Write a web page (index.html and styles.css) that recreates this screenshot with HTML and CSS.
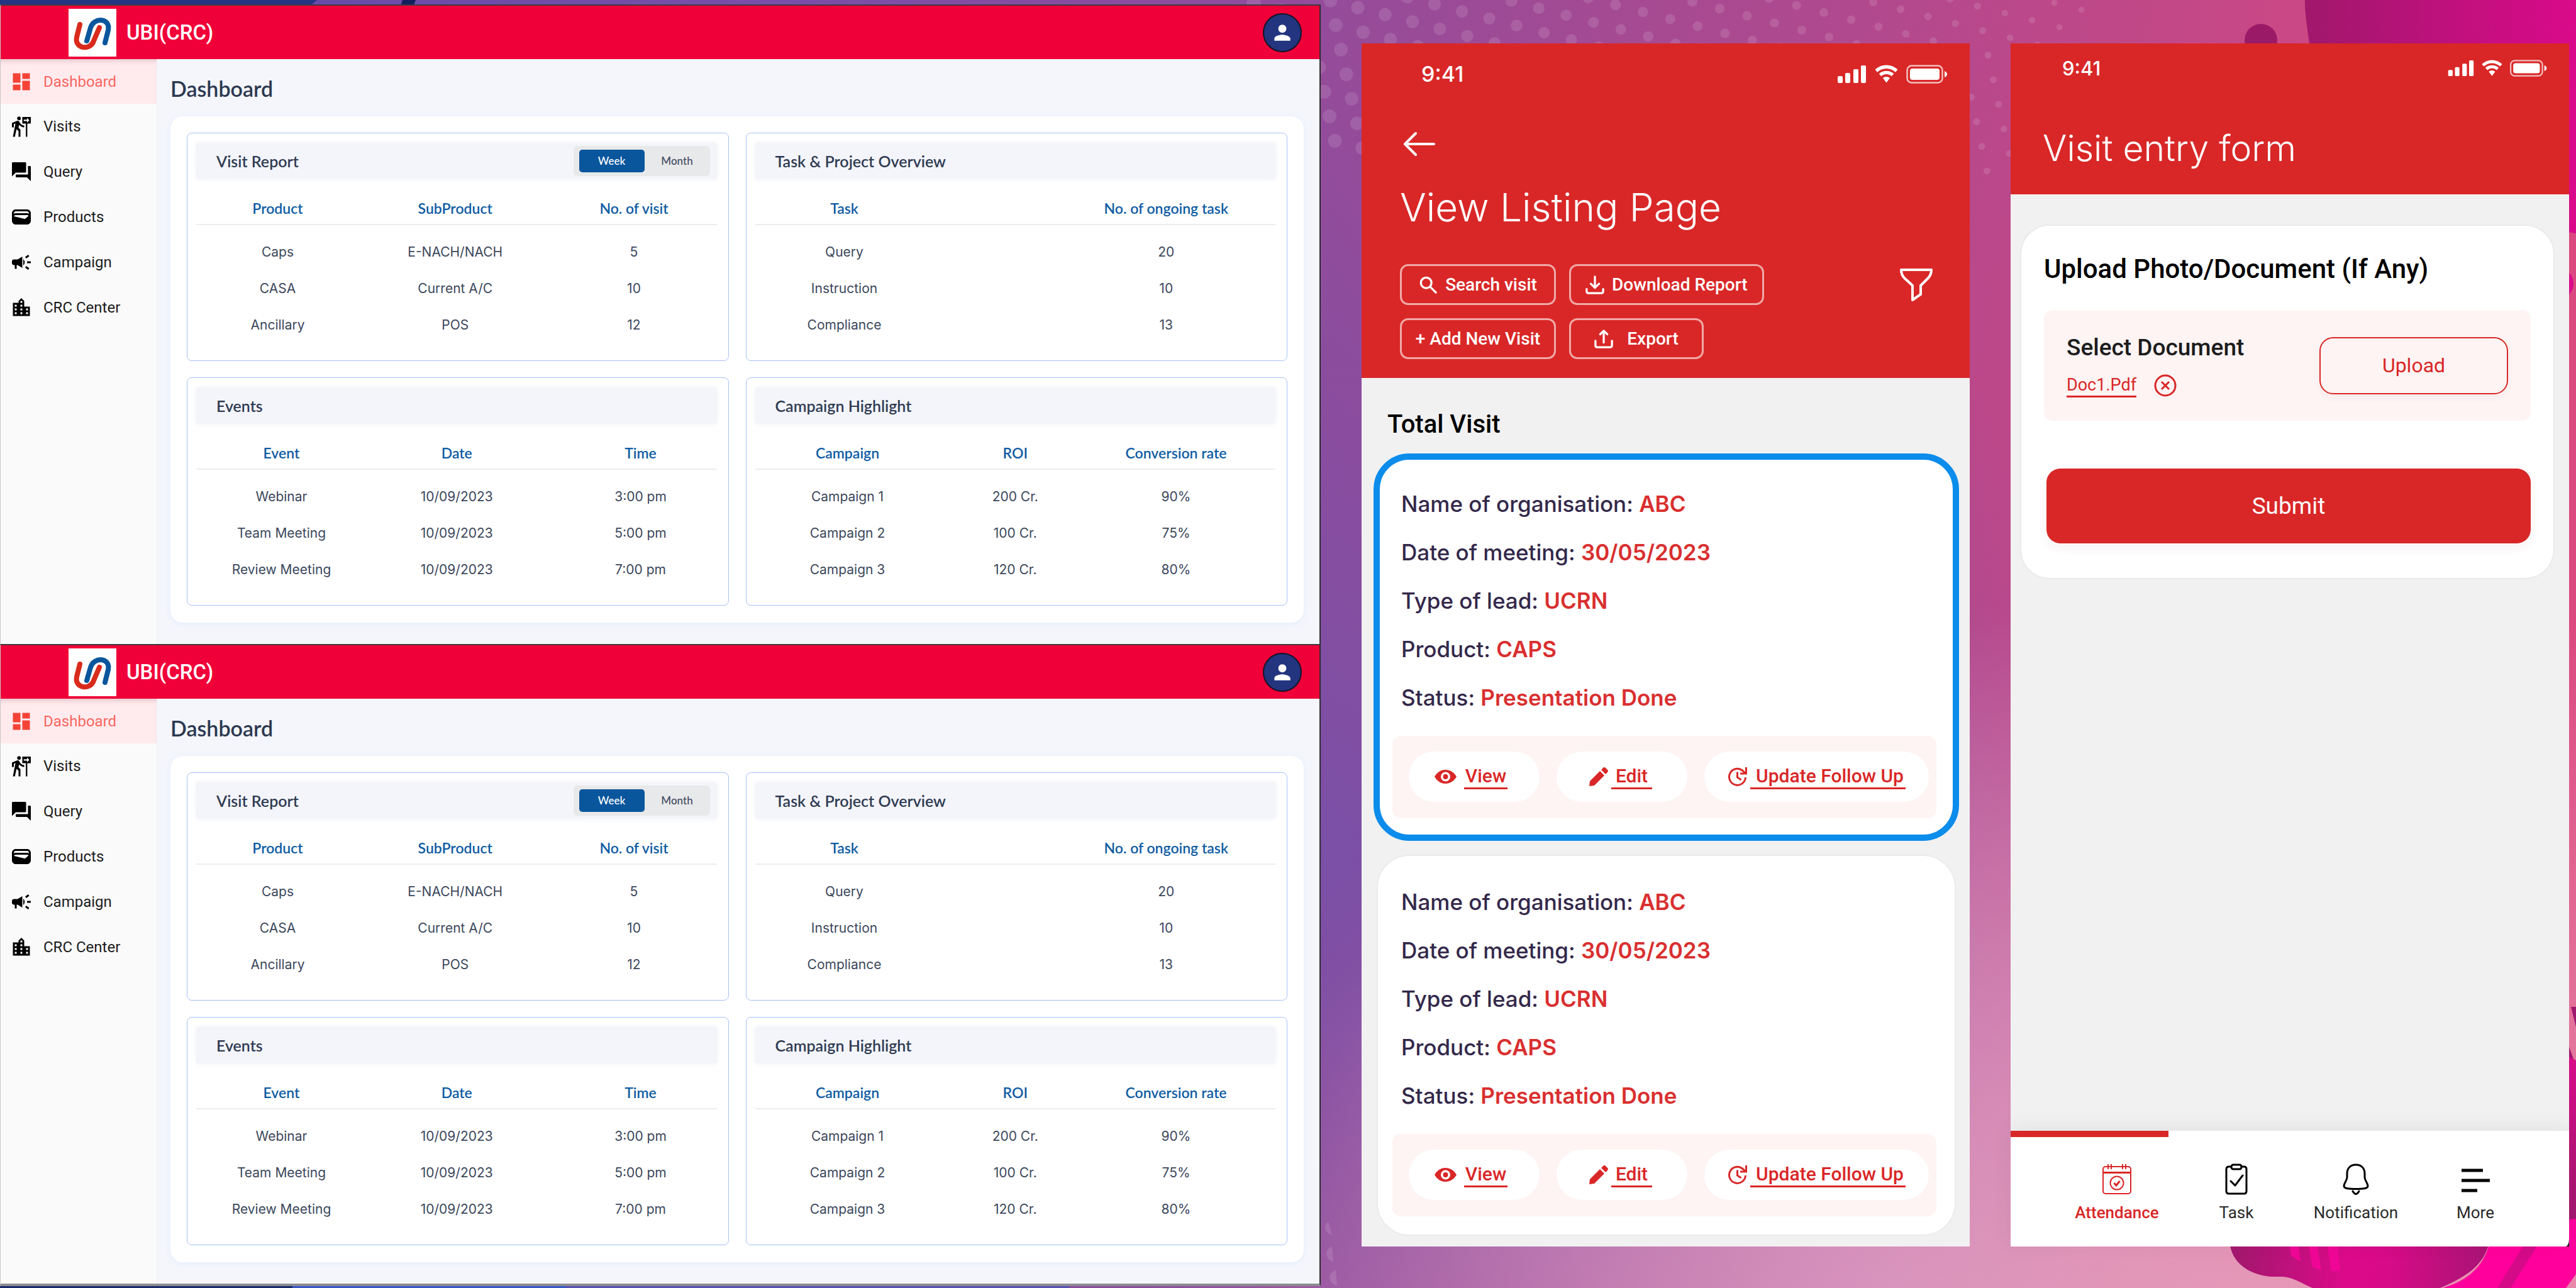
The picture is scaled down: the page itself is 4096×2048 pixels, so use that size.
FILE: index.html
```html
<!DOCTYPE html>
<html lang="en">
<head>
<meta charset="utf-8">
<title>UBI(CRC)</title>
<meta name="viewport" content="width=device-width, initial-scale=1">
<link rel="stylesheet" href="styles.css">
</head>
<body>
<svg class="sprite" aria-hidden="true">
  <symbol id="i-logo" viewBox="0 0 76 76"><g fill="none" stroke-width="8" stroke-linecap="round"><path stroke="#d92a1c" d="M18 25L13 45C9 64 35 67 40 51L49 30"/><path stroke="#0a569d" d="M29 51L35 30C40 13 67 14 63 34L58 54"/></g></symbol>
  <symbol id="i-dash" viewBox="0 0 24 24"><path d="M3 13h8V3H3v10zm0 8h8v-6H3v6zm10 0h8V11h-8v10zm0-18v6h8V3h-8z"/></symbol>
  <symbol id="i-visit" viewBox="0 0 24 24"><path d="M9.5 5.5c1.1 0 2-.9 2-2s-.9-2-2-2-2 .9-2 2 .9 2 2 2zM5.75 8.9L3 23h2.100l1.750-8L9 17v6h2v-7.550L8.950 13.400l.600-3C10.850 12 12.800 13 15 13v-2c-1.850 0-3.450-1-4.350-2.450l-.950-1.600C9.350 6.350 8.700 6 8 6c-.250 0-.500.050-.750.150L2 8.300V13h2V9.650l1.750-.75M13 2v7h3.750v14h1.500V9H22V2h-9zm5.010 6V6.250H14.500v-1.500h3.510V3l2.490 2.500L18.010 8z"/></symbol>
  <symbol id="i-query" viewBox="0 0 24 24"><path d="M21 6h-2v9H6v2c0 .55.45 1 1 1h11l4 4V7c0-.55-.45-1-1-1zm-4 6V3c0-.55-.45-1-1-1H3c-.55 0-1 .45-1 1v14l4-4h10c.55 0 1-.45 1-1z"/></symbol>
  <symbol id="i-product" viewBox="0 0 24 24"><path d="M18 4H6C3.790 4 2 5.790 2 8v8c0 2.210 1.790 4 4 4h12c2.210 0 4-1.790 4-4V8c0-2.210-1.790-4-4-4zm-1.860 9.770c-.240.200-.570.280-.880.200L4.150 11.250C4.450 10.520 5.160 10 6 10h12c.670 0 1.260.340 1.630.840l-3.490 2.930zM18 6c1.100 0 2 .900 2 2v.550c-.590-.340-1.270-.550-2-.550H6c-.730 0-1.410.210-2 .550V8c0-1.100.900-2 2-2h12z"/></symbol>
  <symbol id="i-campaign" viewBox="0 0 24 24"><path d="M18 11v2h4v-2h-4zm-2 6.610c.960.710 2.210 1.650 3.200 2.390.400-.530.800-1.070 1.200-1.600-.990-.740-2.240-1.680-3.200-2.400-.400.540-.800 1.080-1.200 1.610zM20.400 5.600c-.400-.530-.800-1.070-1.200-1.600-.990.740-2.240 1.680-3.200 2.400.400.530.800 1.070 1.200 1.600.960-.720 2.210-1.650 3.200-2.400zM4 9c-1.100 0-2 .900-2 2v2c0 1.100.900 2 2 2h1v4h2v-4h1l5 3V6L8 9H4zm11.500 3c0-1.330-.580-2.530-1.500-3.350v6.690c.920-.810 1.500-2.010 1.500-3.340z"/></symbol>
  <symbol id="i-city" viewBox="0 0 24 24"><path d="M15 11V5l-3-3-3 3v2H3v14h18V11h-6zm-8 8H5v-2h2v2zm0-4H5v-2h2v2zm0-4H5V9h2v2zm6 8h-2v-2h2v2zm0-4h-2v-2h2v2zm0-4h-2V9h2v2zm0-4h-2V5h2v2zm6 12h-2v-2h2v2zm0-4h-2v-2h2v2z"/></symbol>
  <symbol id="i-person" viewBox="0 0 24 24"><path d="M12 12c2.210 0 4-1.790 4-4s-1.790-4-4-4-4 1.790-4 4 1.790 4 4 4zm0 2c-2.670 0-8 1.340-8 4v2h16v-2c0-2.660-5.330-4-8-4z"/></symbol>
  <symbol id="i-status" viewBox="0 0 174 30"><rect y="18" width="8" height="11" rx="2"/><rect x="12" y="13" width="8" height="16" rx="2"/><rect x="25" y="7" width="8" height="22" rx="2"/><rect x="37" y="1" width="8" height="28" rx="2"/><path d="M77.500 6c5.500 0 10.500 2.200 14.300 5.800l3.600-4A26 26 0 0 0 77.500.500 26 26 0 0 0 59.600 7.800l3.600 4A21 21 0 0 1 77.500 6zm0 9c3.100 0 5.900 1.200 8.100 3.200l3.700-4A17.500 17.500 0 0 0 77.500 9.700c-4.500 0-8.700 1.700-11.800 4.500l3.700 4a12 12 0 0 1 8.100-3.200zm0 4c-2.200 0-4.100.800-5.600 2.100l5.600 7.400 5.600-7.400a8.500 8.500 0 0 0-5.600-2.100z"/><rect x="110.500" y="1.500" width="56" height="27" rx="7" fill="none" stroke="#fff" stroke-opacity=".7" stroke-width="2.500"/><rect x="115" y="6" width="47" height="18" rx="4"/><path d="M170 10c2.500 1 4 2.800 4 5s-1.500 4-4 5z"/></symbol>
  <symbol id="i-eye" viewBox="0 0 35 22"><path fill-rule="evenodd" d="M17.500 0C9 0 3 5.500 0 11c3 5.500 9 11 17.500 11S32 16.500 35 11C32 5.500 26 0 17.500 0zm0 3.500a7.500 7.500 0 1 1 0 15 7.500 7.500 0 0 1 0-15zm0 3.500a4 4 0 1 0 0 8 4 4 0 0 0 0-8z"/></symbol>
  <symbol id="i-pencil" viewBox="0 0 30 30"><path d="M0 30l1-8L17 6l7 7L8 29zM19 4l3-3c1.200-1.200 2.800-1.200 4 0l3 3c1.200 1.200 1.200 2.800 0 4l-3 3z"/></symbol>
  <symbol id="i-update" viewBox="0 0 32 32"><g fill="none" stroke="#d92727" stroke-width="3"><path d="M28.500 17A13 13 0 1 1 24 6.500l5 4.500M15.500 8.500V17l6 4"/><path d="M29.500 1v10H20"/></g></symbol>
</svg>

<svg class="decor" viewBox="0 0 4096 2048" preserveAspectRatio="none" aria-hidden="true">
  <defs>
    <linearGradient id="g-top"><stop offset="0" stop-color="#a0186c"/><stop offset="1" stop-color="#da0a8a"/></linearGradient>
    <linearGradient id="g-side" x2="0" y2="1"><stop offset="0" stop-color="#d80b88"/><stop offset="1" stop-color="#a0186e"/></linearGradient>
    <linearGradient id="g-drop"><stop offset="0" stop-color="#a0186c"/><stop offset=".45" stop-color="#dc0a8a"/><stop offset=".6" stop-color="#d80a88"/><stop offset="1" stop-color="#a81474"/></linearGradient>
  </defs>
  <g id="dots" fill="#fff" fill-opacity=".12"></g>
  <path fill="#fff" fill-opacity=".12" d="M2112 1942c-8 6-6 18 6 22zM2118 1982c-12 4-12 20 2 24zM2124 2020c-14 4-12 22 2 24z"/>
  <path fill="#243583" d="M0 0H504L480 20H0z"/>
  <path fill="#121f5c" d="M640 0H661L653 20H634z"/>
  <path fill="#1a2a6c" d="M0 2040H465V2048H0z"/>
  <path fill="#3858c6" d="M465 2040H900V2048H465z"/>
  <path fill="#5a50b6" d="M900 2040H1700V2048H900z"/>
  <circle cx="3595" cy="64" r="26" fill="#9a1a68"/>
  <path fill="url(#g-top)" d="M3665 0Q3664 16 3672 69L3720 300L4060 366L4096 371V0z"/>
  <circle cx="4067" cy="451" r="25" fill="#da0a8a"/>
  <path fill="#a0186e" d="M4088 1601H4096V1633zM4080 1650L4092 1684H4080z"/>
  <path fill="url(#g-side)" d="M4080 1678L4096 1686V1950H4080z"/>
  <path fill="url(#g-drop)" d="M3545 1970C3546 2015 3588 2031 3620 2030C3644 2029 3650 2036 3677 2048H3880C3930 2026 3950 2010 3960 1970z"/>
  <path fill="#ff009c" d="M3959 1975C3950 2010 3930 2034 3884 2048H4080L4096 2026V1938L4076 1940V1975z"/>
  <path fill="#d40a88" d="M4016 1975H4038L3992 2048H3971z"/>
  <path fill="#f00696" d="M3640 1975H3654L3658 2006L3643 1997zM3670 1975H3684L3691 2020L3677 2015zM3700 1975H3716L3721 2021L3707 2021z"/>
</svg>

<div class="board">
  <div class="dashboards" id="dashboards">
    <section class="dashboard">
      <header class="appbar">
        <span class="logo"><svg><use href="#i-logo"/></svg></span>
        <strong class="brand">UBI(CRC)</strong>
        <button class="avatar" type="button" aria-label="Account"><svg><use href="#i-person"/></svg></button>
      </header>
      <div class="shell">
        <nav class="side">
          <a class="active" href="#"><svg><use href="#i-dash"/></svg>Dashboard</a>
          <a href="#"><svg><use href="#i-visit"/></svg>Visits</a>
          <a href="#"><svg><use href="#i-query"/></svg>Query</a>
          <a href="#"><svg><use href="#i-product"/></svg>Products</a>
          <a href="#"><svg><use href="#i-campaign"/></svg>Campaign</a>
          <a href="#"><svg><use href="#i-city"/></svg>CRC Center</a>
        </nav>
        <main class="main">
          <h1>Dashboard</h1>
          <div class="panel">
            <article class="tile">
              <div class="tile-head"><h2>Visit Report</h2><div class="toggle"><button class="on" type="button">Week</button><button type="button">Month</button></div></div>
              <table class="t-visit">
                <thead><tr><th>Product</th><th>SubProduct</th><th>No. of visit</th></tr></thead>
                <tbody><tr><td>Caps</td><td>E-NACH/NACH</td><td>5</td></tr><tr><td>CASA</td><td>Current A/C</td><td>10</td></tr><tr><td>Ancillary</td><td>POS</td><td>12</td></tr></tbody>
              </table>
            </article>
            <article class="tile">
              <div class="tile-head"><h2>Task &amp; Project Overview</h2></div>
              <table class="t-task">
                <thead><tr><th>Task</th><th>No. of ongoing task</th></tr></thead>
                <tbody><tr><td>Query</td><td>20</td></tr><tr><td>Instruction</td><td>10</td></tr><tr><td>Compliance</td><td>13</td></tr></tbody>
              </table>
            </article>
            <article class="tile">
              <div class="tile-head"><h2>Events</h2></div>
              <table class="t-event">
                <thead><tr><th>Event</th><th>Date</th><th>Time</th></tr></thead>
                <tbody><tr><td>Webinar</td><td>10/09/2023</td><td>3:00 pm</td></tr><tr><td>Team Meeting</td><td>10/09/2023</td><td>5:00 pm</td></tr><tr><td>Review Meeting</td><td>10/09/2023</td><td>7:00 pm</td></tr></tbody>
              </table>
            </article>
            <article class="tile">
              <div class="tile-head"><h2>Campaign Highlight</h2></div>
              <table class="t-camp">
                <thead><tr><th>Campaign</th><th>ROI</th><th>Conversion rate</th></tr></thead>
                <tbody><tr><td>Campaign 1</td><td>200 Cr.</td><td>90%</td></tr><tr><td>Campaign 2</td><td>100 Cr.</td><td>75%</td></tr><tr><td>Campaign 3</td><td>120 Cr.</td><td>80%</td></tr></tbody>
              </table>
            </article>
          </div>
        </main>
      </div>
    </section>
    <section class="dashboard">
      <header class="appbar">
        <span class="logo"><svg><use href="#i-logo"/></svg></span>
        <strong class="brand">UBI(CRC)</strong>
        <button class="avatar" type="button" aria-label="Account"><svg><use href="#i-person"/></svg></button>
      </header>
      <div class="shell">
        <nav class="side">
          <a class="active" href="#"><svg><use href="#i-dash"/></svg>Dashboard</a>
          <a href="#"><svg><use href="#i-visit"/></svg>Visits</a>
          <a href="#"><svg><use href="#i-query"/></svg>Query</a>
          <a href="#"><svg><use href="#i-product"/></svg>Products</a>
          <a href="#"><svg><use href="#i-campaign"/></svg>Campaign</a>
          <a href="#"><svg><use href="#i-city"/></svg>CRC Center</a>
        </nav>
        <main class="main">
          <h1>Dashboard</h1>
          <div class="panel">
            <article class="tile">
              <div class="tile-head"><h2>Visit Report</h2><div class="toggle"><button class="on" type="button">Week</button><button type="button">Month</button></div></div>
              <table class="t-visit">
                <thead><tr><th>Product</th><th>SubProduct</th><th>No. of visit</th></tr></thead>
                <tbody><tr><td>Caps</td><td>E-NACH/NACH</td><td>5</td></tr><tr><td>CASA</td><td>Current A/C</td><td>10</td></tr><tr><td>Ancillary</td><td>POS</td><td>12</td></tr></tbody>
              </table>
            </article>
            <article class="tile">
              <div class="tile-head"><h2>Task &amp; Project Overview</h2></div>
              <table class="t-task">
                <thead><tr><th>Task</th><th>No. of ongoing task</th></tr></thead>
                <tbody><tr><td>Query</td><td>20</td></tr><tr><td>Instruction</td><td>10</td></tr><tr><td>Compliance</td><td>13</td></tr></tbody>
              </table>
            </article>
            <article class="tile">
              <div class="tile-head"><h2>Events</h2></div>
              <table class="t-event">
                <thead><tr><th>Event</th><th>Date</th><th>Time</th></tr></thead>
                <tbody><tr><td>Webinar</td><td>10/09/2023</td><td>3:00 pm</td></tr><tr><td>Team Meeting</td><td>10/09/2023</td><td>5:00 pm</td></tr><tr><td>Review Meeting</td><td>10/09/2023</td><td>7:00 pm</td></tr></tbody>
              </table>
            </article>
            <article class="tile">
              <div class="tile-head"><h2>Campaign Highlight</h2></div>
              <table class="t-camp">
                <thead><tr><th>Campaign</th><th>ROI</th><th>Conversion rate</th></tr></thead>
                <tbody><tr><td>Campaign 1</td><td>200 Cr.</td><td>90%</td></tr><tr><td>Campaign 2</td><td>100 Cr.</td><td>75%</td></tr><tr><td>Campaign 3</td><td>120 Cr.</td><td>80%</td></tr></tbody>
              </table>
            </article>
          </div>
        </main>
      </div>
    </section>
  </div>

  <section class="phone listing">
    <header class="phone-head">
      <div class="statusbar"><span>9:41</span><svg><use href="#i-status"/></svg></div>
      <div class="head-body">
        <a class="back" href="#" aria-label="Back"><svg viewBox="0 0 50 40"><path fill="none" stroke="#fff" stroke-width="4" stroke-linecap="round" stroke-linejoin="round" d="M48 20H3M19 3L2 20l17 17"/></svg></a>
        <h1>View Listing Page</h1>
        <div class="tools">
          <div class="tool-grid">
            <button type="button"><svg viewBox="0 0 32 32"><g fill="none" stroke="#fff" stroke-width="3.500"><circle cx="12.500" cy="12.500" r="9"/><path d="M19 19l11 11"/></g></svg>Search visit</button>
            <button type="button"><svg viewBox="0 0 32 32"><path fill="none" stroke="#fff" stroke-width="3.500" stroke-linecap="round" stroke-linejoin="round" d="M16 2v19M9 14l7 7 7-7M2 23v4q0 3 3 3h22q3 0 3-3v-4"/></svg>Download Report</button>
            <button type="button">+ Add New Visit</button>
            <button class="export" type="button"><svg viewBox="0 0 32 32"><path fill="none" stroke="#fff" stroke-width="3.500" stroke-linecap="round" stroke-linejoin="round" d="M16 22V3M10 8l6-6 6 6M2 19v8q0 3 3 3h22q3 0 3-3v-8"/></svg>Export</button>
          </div>
          <button class="filter" type="button" aria-label="Filter"><svg viewBox="0 0 52 52"><path fill="none" stroke="#fff" stroke-width="4" stroke-linejoin="round" d="M2 2H50Q50 10 45 15L33 27V41L20 50V27L7 15Q2 10 2 2z"/></svg></button>
        </div>
      </div>
    </header>
    <div class="phone-body">
      <h2>Total Visit</h2>
      <article class="visit selected">
        <dl>
          <div><dt>Name of organisation:</dt> <dd>ABC</dd></div>
          <div><dt>Date of meeting:</dt> <dd>30/05/2023</dd></div>
          <div><dt>Type of lead:</dt> <dd>UCRN</dd></div>
          <div><dt>Product:</dt> <dd>CAPS</dd></div>
          <div><dt>Status:</dt> <dd>Presentation Done</dd></div>
        </dl>
        <div class="actions">
          <a class="view" href="#"><svg><use href="#i-eye"/></svg><span>View</span></a>
          <a class="edit" href="#"><svg><use href="#i-pencil"/></svg><span>Edit</span></a>
          <a class="update" href="#"><svg><use href="#i-update"/></svg><span>Update Follow Up</span></a>
        </div>
      </article>
      <article class="visit">
        <dl>
          <div><dt>Name of organisation:</dt> <dd>ABC</dd></div>
          <div><dt>Date of meeting:</dt> <dd>30/05/2023</dd></div>
          <div><dt>Type of lead:</dt> <dd>UCRN</dd></div>
          <div><dt>Product:</dt> <dd>CAPS</dd></div>
          <div><dt>Status:</dt> <dd>Presentation Done</dd></div>
        </dl>
        <div class="actions">
          <a class="view" href="#"><svg><use href="#i-eye"/></svg><span>View</span></a>
          <a class="edit" href="#"><svg><use href="#i-pencil"/></svg><span>Edit</span></a>
          <a class="update" href="#"><svg><use href="#i-update"/></svg><span>Update Follow Up</span></a>
        </div>
      </article>
    </div>
  </section>

  <section class="phone entry">
    <header class="phone-head">
      <div class="statusbar"><span>9:41</span><svg><use href="#i-status"/></svg></div>
      <h1>Visit entry form</h1>
    </header>
    <div class="phone-body">
      <form class="form-card">
        <h2>Upload Photo/Document (If Any)</h2>
        <div class="picker">
          <div>
            <h3>Select Document</h3>
            <div class="file"><a href="#">Doc1.Pdf</a><button type="button" aria-label="Remove Doc1.Pdf"><svg viewBox="0 0 36 36"><g fill="none" stroke="#d92727" stroke-width="3"><circle cx="18" cy="18" r="16"/><path d="M12 12l12 12M24 12L12 24"/></g></svg></button></div>
          </div>
          <button class="upload" type="button">Upload</button>
        </div>
        <button class="submit" type="button">Submit</button>
      </form>
    </div>
    <nav class="tabs">
      <a class="active" href="#"><svg viewBox="0 0 48 50"><g fill="none" stroke="#d92727" stroke-width="2"><rect x="2" y="5" width="44" height="43" rx="4"/><path stroke-width="3" d="M2 14.500H46"/><path d="M10 1v8M15 1v8M33 1v8M38 1v8"/><circle cx="24" cy="31" r="10.500"/><path stroke-width="3" d="M19.500 31l3.500 4 5.500-7"/></g></svg>Attendance</a>
      <a href="#"><svg viewBox="0 0 48 50"><g fill="none" stroke="#000" stroke-width="3" stroke-linejoin="round" stroke-linecap="round"><path d="M16 5h-4q-4 0-4 4v35q0 4 4 4h24q4 0 4-4V9q0-4-4-4h-4"/><rect x="16" y="2" width="16" height="7" rx="3"/><path d="M15 28l7 7L34 19"/></g></svg>Task</a>
      <a href="#"><svg viewBox="0 0 48 50"><g fill="none" stroke="#000" stroke-width="3" stroke-linejoin="round" stroke-linecap="round"><path d="M24 2C14 2 10 9 10 16v6c0 5-5 9-5 14 0 4 8 4.500 19 4.500S43 40 43 36c0-5-5-9-5-14v-6C38 9 34 2 24 2zM19 44q5 9 10 0"/></g></svg>Notification</a>
      <a href="#"><svg viewBox="0 0 48 50"><path fill="none" stroke="#000" stroke-width="5" d="M2 11H36M2 27H47M2 43H27"/></svg>More</a>
    </nav>
  </section>
</div>
<script src="dots.js"></script>
</body>
</html>
```
FILE: styles.css
```css
* { box-sizing: border-box; margin: 0; padding: 0; }
body {
  min-height: 100vh;
  position: relative;
  overflow-x: hidden;
  font-family: Roboto, "Liberation Sans", sans-serif;
  color: #000;
  background:
    radial-gradient(ellipse 46% 62% at 90% 108%, rgba(236, 168, 192, .9), rgba(236, 168, 192, 0)),
    radial-gradient(ellipse 24% 58% at 74% 104%, rgba(196, 146, 204, .75), rgba(196, 146, 204, 0)),
    radial-gradient(ellipse 32% 62% at 51% 66%, rgba(118, 80, 168, .9), rgba(118, 80, 168, 0)),
    linear-gradient(100deg, #5d48a6 0%, #7a4fa8 28%, #984b98 50%, #c04888 76%, #da4880 92%, #dd487c 100%);
}
button { font: inherit; color: inherit; background: none; border: 0; cursor: pointer; }
a { color: inherit; text-decoration: none; }
svg { display: block; fill: currentColor; }
h1, h2, h3 { font-weight: 500; }
.sprite { position: absolute; width: 0; height: 0; }
.decor { position: absolute; inset: 0; width: 100%; height: 100%; z-index: -1; }

.board {
  display: grid;
  grid-template-columns: 2100fr 967fr 888fr;
  column-gap: 65px;
  padding-right: 11px;
  min-height: 100vh;
}

/* dashboards */
.dashboards { padding-top: 7px; }
.dashboard {
  border-top: 2px solid #3c3c44;
  border-right: 2px solid #2c2c30;
  border-left: 1px solid #c9c9cc;
  background: #f4f6fb;
}
.dashboard:last-child { border-bottom: 4px solid #8c8c90; }
.appbar {
  display: flex;
  align-items: center;
  height: 85px;
  padding: 0 28px 0 108px;
  background: #f00038;
  color: #fff;
}
.logo { background: #fff; }
.logo svg { width: 76px; height: 76px; }
.brand { margin-left: 16px; font-size: 33px; font-weight: 500; }
.avatar {
  display: grid;
  place-items: center;
  width: 62px;
  height: 62px;
  margin-left: auto;
  border: 2px solid #141428;
  border-radius: 50%;
  background: #24357f;
}
.avatar svg { width: 38px; height: 38px; }
.shell { display: grid; grid-template-columns: 249px 1fr; }
.side {
  display: grid;
  align-content: start;
  grid-template-rows: 71px repeat(5, 72px);
  background: #fafafa;
  border-right: 1px solid #eef0f5;
  font-size: 24px;
}
.side a { display: flex; align-items: center; gap: 17px; padding-left: 15px; color: #1c1c1c; }
.side svg { width: 36px; height: 36px; color: #000; }
.side .active {
  color: #fb6661;
  background: #ffebee;
  box-shadow: inset 0 8px 8px -6px rgba(120, 60, 70, .25);
}
.side .active svg { color: #f44336; }
.main { padding: 0 25px 34px 21px; }
.main h1 {
  padding-top: 25px;
  height: 91px;
  font: 600 34px/44px Lato, sans-serif;
  color: #2c3850;
}
.panel {
  display: grid;
  grid-template-columns: 1fr 1fr;
  gap: 26px 27px;
  padding: 26px 26px 27px;
  border-radius: 20px;
  background: #fff;
  box-shadow: 0 2px 10px #e4edfd;
}
.tile {
  height: 363px;
  padding: 15px 18px 0 14px;
  border: 1px solid #a9c0f7;
  border-radius: 8px;
}
.tile-head {
  display: flex;
  align-items: center;
  justify-content: space-between;
  height: 58px;
  padding: 0 11px 0 32px;
  border-radius: 4px;
  background: #f4f5fb;
  box-shadow: 0 0 8px #f0f1f7;
}
.tile-head h2 { font: 600 25px/32px Lato, sans-serif; color: #2f3b52; }
.toggle { display: flex; padding: 6px 0 6px 9px; border-radius: 6px; background: #e8e9ea; }
.toggle button { width: 104px; height: 36px; border-radius: 5px; font: 500 17px/20px Lato, sans-serif; color: #3f4a5f; }
.toggle .on { background: #0a569d; color: #fff; }
table { width: 100%; table-layout: fixed; border-collapse: collapse; text-align: center; }
th { height: 72px; padding-top: 33px; vertical-align: top; border-bottom: 2px solid #ececec; font: 600 23px/26px Lato, sans-serif; color: #0f5ca3; }
thead::after { content: ""; display: block; height: 14px; }
td { height: 58px; font: 400 21px/28px Inter, sans-serif; color: #3c475c; }
.t-visit th:nth-child(1) { width: 259px; }
.t-visit th:nth-child(3) { width: 263px; }
.t-task th:first-child { width: 284px; }
.t-task :is(th, td):last-child { padding-left: 196px; }
.t-event th:nth-child(1) { width: 271px; }
.t-event th:nth-child(3) { width: 270px; }
.t-event :is(th, td):last-child { padding-left: 28px; }
.t-camp th:nth-child(1), .t-camp th:nth-child(3) { width: 294px; }
.t-camp :is(th, td):last-child { padding-right: 22px; }

/* phones */
.phone { display: flex; flex-direction: column; margin: 69px 0 66px; background: #1c1c1c; }
.phone-head { background: #d92727; color: #fff; }
.phone-body { flex: 1; background: #f1f1f1; }
.statusbar { display: flex; align-items: center; justify-content: space-between; font: 500 34px/40px Inter, sans-serif; }
.phone h1 { font-family: Inter, sans-serif; font-weight: 300; }

.listing .statusbar { height: 98px; padding: 0 36px 0 95px; }
.listing .statusbar svg { width: 174px; height: 30px; }
.head-body { padding: 34px 59px 30px 61px; }
.back { display: block; width: 64px; height: 56px; padding: 8px 6px; }
.back svg { width: 50px; height: 40px; }
.listing h1 { margin-top: 33px; font-size: 62px; line-height: 80px; }
.tools { display: flex; justify-content: space-between; align-items: start; margin-top: 50px; }
.tool-grid { display: grid; grid-template-columns: 248px auto; gap: 21px; }
.tool-grid button {
  display: flex;
  align-items: center;
  justify-content: center;
  gap: 12px;
  height: 65px;
  padding: 0 23px;
  border: 3px solid #f0a9a7;
  border-radius: 13px;
  font-size: 28px;
  font-weight: 500;
  white-space: nowrap;
  justify-self: start;
  min-width: 214px;
}
.tool-grid button:nth-child(odd) { width: 248px; }
.tool-grid svg { width: 30px; height: 30px; }
.tool-grid .export { gap: 22px; }
.filter { margin-top: 7px; }
.filter svg { width: 52px; height: 52px; }

.listing .phone-body { padding: 50px 24px 19px 26px; }
.listing h2 { margin: 0 0 29px 15px; font-size: 40px; line-height: 48px; }
.visit {
  padding: 35px 29px 29px 23px;
  border-radius: 50px;
  background: #fff;
  box-shadow: 0 0 0 2px #ebebeb;
}
.visit + .visit { margin-top: 31px; }
.selected { outline: 10px solid #0c8ceb; outline-offset: -3px; }
.visit dl { margin: 0 0 22px 14px; font: 500 35px/77px Inter, sans-serif; color: #33284a; }
.visit dl div { height: 77px; }
.visit dt, .visit dd { display: inline; }
.visit dd { color: #d92f2f; font-weight: 600; }
.actions { display: grid; grid-template-columns: 208px 208px 1fr; gap: 27px; padding: 25px 12px 26px 26px; border-radius: 14px; background: #fdf4f3; color: #d92727; }
.actions a {
  display: flex;
  align-items: center;
  justify-content: center;
  height: 80px;
  border-radius: 40px;
  background: #fff;
  font-size: 30px;
  font-weight: 500;
  line-height: 36px;
  white-space: nowrap;
}
.actions span { border-bottom: 3px solid; }
.actions .view { gap: 12px; padding-right: 10px; }
.view span { padding: 0 2px; }
.view svg { width: 35px; height: 22px; }
.actions .edit { gap: 5px; padding-right: 4px; }
.edit span { padding: 0 7px; }
.edit svg { width: 30px; height: 30px; }
.update { gap: 4px; }
.update span { padding: 0 3px 0 9px; }
.update svg { width: 32px; height: 32px; }

.entry .statusbar { height: 79px; padding: 0 34px 0 82px; font-size: 31px; }
.entry .statusbar svg { width: 160px; height: 27px; }
.entry h1 { padding: 51px 51px 37px; font-size: 57px; line-height: 73px; }
.entry .phone-body { padding: 50px 25px 50px 17px; }
.form-card { padding: 45px 36px 55px; border-radius: 45px; background: #fff; box-shadow: 0 0 0 2px #eaeaea; }
.form-card h2 { font-size: 42px; line-height: 48px; white-space: nowrap; }
.picker { display: flex; align-items: center; justify-content: space-between; height: 176px; margin: 41px 0 76px; padding: 0 36px; border-radius: 14px; background: #fdf4f3; }
.picker h3 { margin-bottom: 16px; font-size: 37px; line-height: 48px; color: #1c1c1c; }
.file { display: flex; align-items: center; gap: 28px; height: 40px; color: #d92727; }
.file a { border-bottom: 3px solid; font-size: 27px; line-height: 34px; }
.file svg { width: 36px; height: 36px; }
.upload { width: 300px; height: 91px; border: 2px solid #d92727; border-radius: 22px; color: #d92727; font-size: 32px; box-shadow: 0 6px 12px rgba(120, 40, 90, .04); }
.submit { display: block; width: calc(100% - 4px); height: 119px; margin-left: 4px; border-radius: 22px; background: #d92727; color: #fff; font-size: 37px; box-shadow: 0 8px 16px rgba(120, 40, 90, .06); }
.tabs {
  position: relative;
  display: grid;
  grid-template-columns: repeat(4, 1fr);
  height: 184px;
  padding: 52px 54px 0 74px;
  background: #fff;
  border-bottom-right-radius: 6px 12px;
  box-shadow: 0 -6px 30px rgba(60, 60, 80, .08);
  font-size: 26px;
  line-height: 32px;
  color: #2a2a2a;
}
.tabs::before { content: ""; position: absolute; left: 0; top: 0; width: 251px; height: 10px; background: #d92727; }
.tabs a { display: flex; flex-direction: column; align-items: center; gap: 12px; }
.tabs svg { width: 48px; height: 50px; }
.tabs .active { color: #d92727; font-weight: 500; }
```
FILE: dots.js
```js
// Slanted lattice of dots that shrink towards the right.
const dots = document.getElementById("dots");
const NS = "http://www.w3.org/2000/svg";
for (let i = -10; i < 30; i++) {
  for (let j = -9; j < 12; j++) {
    const x = 2159 + 43.5 * i + 8.4 * j;
    const y = 12 + 11.3 * i + 39.1 * j;
    if (x < 1990 || x > 3310 || y < -10 || y > 300 || (x < 2180 && y > 240)) continue;
    const c = document.createElementNS(NS, "circle");
    c.setAttribute("cx", x);
    c.setAttribute("cy", y);
    c.setAttribute("r", 11 - (x - 2100) * 0.0052);
    dots.append(c);
  }
}
```
